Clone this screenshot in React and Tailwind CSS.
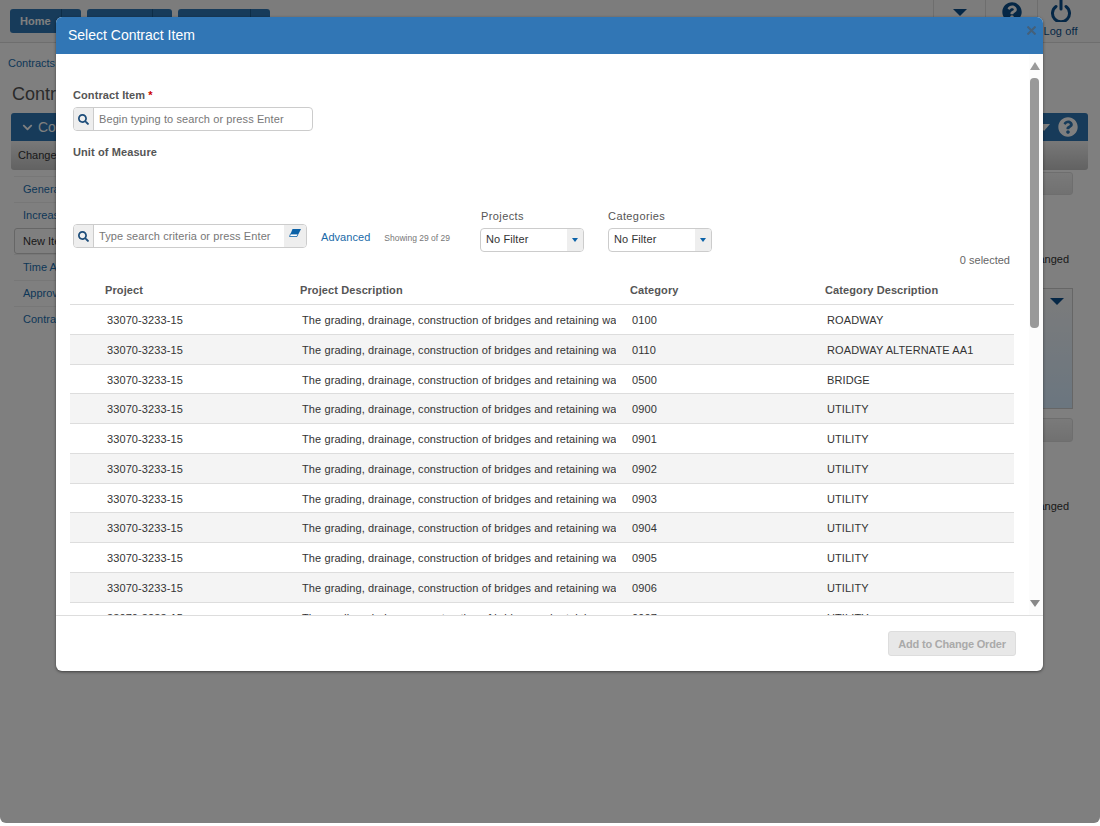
import { FaSearch, FaChevronDown, FaQuestionCircle } from 'react-icons/fa';

const rows = [
  ['0100', 'ROADWAY'],
  ['0110', 'ROADWAY ALTERNATE AA1'],
  ['0500', 'BRIDGE'],
  ['0900', 'UTILITY'],
  ['0901', 'UTILITY'],
  ['0902', 'UTILITY'],
  ['0903', 'UTILITY'],
  ['0904', 'UTILITY'],
  ['0905', 'UTILITY'],
  ['0906', 'UTILITY'],
  ['0907', 'UTILITY'],
];

const navItems = ['General', 'Increase', 'New Item', 'Time Adj', 'Approvals', 'Contract'];

function NavButton({ label, width }) {
  return (
    <div className={`flex h-[24px] rounded-[3px] bg-[#2e77b4] text-[11px] font-bold text-white ${width}`}>
      <span className="flex-1 pl-[10px] leading-[24px]">{label}</span>
      <span className="w-[20px] border-l border-[#1d5c91]" />
    </div>
  );
}

function PowerIcon() {
  return (
    <svg width="22" height="22" viewBox="0 0 22 22" fill="none" stroke="#0a4f8c" strokeWidth="3" strokeLinecap="round">
      <path d="M6 6.5a8.5 8.5 0 1 0 10 0" />
      <path d="M11 -1V9" />
    </svg>
  );
}

function Background() {
  return (
    <div className="h-[823px] overflow-hidden bg-white rounded-b-[6px]">
      <div className="flex h-[43px] justify-between border-b border-[#ddd] bg-[#f8f8f8]">
        <div className="flex gap-[6px] pl-[10px] pt-[9px]">
          <NavButton label="Home" width="w-[71px]" />
          <NavButton label="Contracts" width="w-[85px]" />
          <NavButton label="My Reports" width="w-[92px]" />
        </div>
        <div className="flex">
          <div className="flex w-[52px] justify-center border-l border-[#ddd] pt-[9px]">
            <span className="block h-0 w-0 border-x-[7px] border-t-[7px] border-x-transparent border-t-[#0a4f8c]" />
          </div>
          <div className="flex w-[52px] justify-center border-l border-[#ddd] pt-[2px]">
            <FaQuestionCircle className="text-[20px] text-[#0a4f8c]" />
          </div>
          <div className="flex w-[63px] flex-col items-center border-l border-[#ddd] pr-[17px]">
            <PowerIcon />
            <span className="mt-[2px] text-[11px] leading-[14px] tracking-[0.1px] text-[#0a4f8c]">Log off</span>
          </div>
        </div>
      </div>
      <div className="pl-[8px] pt-[13px] text-[11px] leading-[14px] text-[#1b6fb0]">Contracts</div>
      <div className="pl-[12px] pt-[12px] text-[18px] leading-[24px] text-[#555]">Contract</div>
      <div className="mx-[11px] mt-[7px] w-[1077px]">
        <div className="flex h-[28px] items-center justify-between rounded-t-[3px] bg-[#2e77b4] pl-[11px] pr-[10px] text-white">
          <span className="flex items-center gap-[5px] text-[14px]"><FaChevronDown className="text-[11px]" />Contract</span>
          <span className="flex items-center gap-[8px]">
            <span className="block h-0 w-0 border-x-[6px] border-t-[7px] border-x-transparent border-t-white" />
            <FaQuestionCircle className="text-[20px]" />
          </span>
        </div>
        <div className="flex h-[29px] items-center rounded-b-[3px] bg-gradient-to-b from-[#f2f2f2] to-[#c4c4c4] pl-[7px] text-[11px] text-[#333]">Change</div>
      </div>
      <div className="flex">
        <div className="ml-[14px] mt-[6px] w-[200px] text-[11px] text-[#1b6fb0]">
          {navItems.map((item) => (
            <div
              key={item}
              className={`flex h-[26px] items-center ${item === 'New Item' ? 'rounded-[3px] border border-[#ccc] pl-[8px] text-[#333]' : 'border-t border-[#eee] pl-[9px]'}`}
            >
              {item}
            </div>
          ))}
        </div>
        <div className="ml-auto mr-[27px] w-[60px] pt-[2px] text-[11px] text-[#333]">
          <div className="h-[23px] rounded-[3px] border border-[#ddd] bg-gradient-to-b from-[#f5f5f5] to-[#e2e2e2]" />
          <div className="mt-[56px] pr-[4px] text-right leading-[16px]">Changed</div>
          <div className="mt-[21px] flex h-[121px] justify-end border border-[#ccc] bg-gradient-to-b from-[#f8f8f8] to-[#d6ecff] pr-[8px] pt-[9px]">
            <span className="block h-0 w-0 border-x-[7px] border-t-[7px] border-x-transparent border-t-[#0a4f8c]" />
          </div>
          <div className="mt-[9px] h-[24px] rounded-[3px] border border-[#ddd] bg-gradient-to-b from-[#f5f5f5] to-[#e2e2e2]" />
          <div className="mt-[56px] pr-[4px] text-right leading-[16px]">Changed</div>
        </div>
      </div>
    </div>
  );
}

function Eraser() {
  return (
    <svg width="12" height="8" viewBox="0 0 12 8">
      <path d="M3.5 0H12L9.5 5H1.5Z" fill="#0b62a8" />
      <path d="M1.5 5H9L8 7.5H0.5Z" fill="#fff" stroke="#0b62a8" strokeWidth="0.8" />
    </svg>
  );
}

function SearchBox({ width, placeholder, eraser }) {
  return (
    <div className={`flex h-[24px] overflow-hidden rounded-[4px] border border-[#ccc] bg-white ${width}`}>
      <span className="flex w-[20px] items-center justify-center border-r border-[#ccc] bg-[#eee] text-[#1d4d7a]">
        <FaSearch className="text-[11px]" />
      </span>
      <span className="flex-1 pl-[5px] text-[11px] leading-[22px] tracking-[0.1px] text-[#777]">{placeholder}</span>
      {eraser && (
        <span className="flex w-[22px] items-start justify-center bg-[#eee] pt-[4px]"><Eraser /></span>
      )}
    </div>
  );
}

function FilterSelect({ label, labelClass }) {
  return (
    <div className="w-[104px]">
      <div className={`text-[11px] font-medium leading-[14px] tracking-[0.4px] text-[#555] ${labelClass}`}>{label}</div>
      <div className="mt-[5px] flex h-[24px] overflow-hidden rounded-[4px] border border-[#ccc]">
        <span className="flex-1 pl-[5px] text-[11px] leading-[21px] tracking-[0.1px] text-[#333]">No Filter</span>
        <span className="flex w-[16px] items-center justify-center bg-[#eee]">
          <span className="block h-0 w-0 border-x-[3.5px] border-t-[4px] border-x-transparent border-t-[#0b62a8]" />
        </span>
      </div>
    </div>
  );
}

function ContractItemModal() {
  return (
    <div className="absolute left-[56px] top-[17px] flex h-[654px] w-[987px] flex-col overflow-hidden rounded-[6px] bg-white shadow-[0_1px_3px_rgba(0,0,0,0.5)]">
      <div className="relative h-[37px] shrink-0 bg-[#3176b5] pl-[12px] text-[14px] leading-[36px] text-white">
        Select Contract Item
        <svg className="absolute right-[7px] top-[9px]" width="9" height="9" viewBox="0 0 9 9" stroke="#44607a" strokeWidth="2">
          <path d="M0.5 0.5L8.5 8.5M8.5 0.5L0.5 8.5" />
        </svg>
      </div>

      <div className="relative flex-1 overflow-hidden pl-[14px]">
        <div className="w-[944px]">
          <div className="pl-[3px] pt-[34px] text-[11px] font-bold leading-[14px] tracking-[0.1px] text-[#555]">
            Contract Item <span className="text-[#c00]">*</span>
          </div>
          <div className="ml-[3px] mt-[5px]">
            <SearchBox width="w-[240px]" placeholder="Begin typing to search or press Enter" />
          </div>
          <div className="pl-[3px] pt-[14px] text-[11px] font-bold leading-[14px] tracking-[0.1px] text-[#555]">Unit of Measure</div>

          <div className="relative mt-[50px] flex items-start pl-[3px]">
            <div className="mt-[15px]"><SearchBox width="w-[234px]" placeholder="Type search criteria or press Enter" eraser /></div>
            <span className="ml-[14px] mt-[21px] text-[11px] leading-[14px] tracking-[0.05px] text-[#1a6aa8]">Advanced</span>
            <span className="ml-[14px] mt-[22px] text-[8.5px] leading-[14px] text-[#777]">Showing 29 of 29</span>
            <div className="ml-[30px] flex gap-[24px]">
              <FilterSelect label="Projects" labelClass="pl-[1px]" />
              <FilterSelect label="Categories" />
            </div>
          </div>
          <div className="pt-[1px] pr-[4px] text-right text-[11px] leading-[14px] text-[#666]">0 selected</div>

          <div className="mt-[9px] grid h-[29px] grid-cols-[230px_330px_195px_189px] border-b border-[#ddd] text-[11px] font-bold leading-[29px] tracking-[0.1px] text-[#555]">
            <span className="pl-[35px]">Project</span>
            <span>Project Description</span>
            <span>Category</span>
            <span>Category Description</span>
          </div>
          {rows.map(([code, desc], i) => (
            <div
              key={code}
              className={`grid h-[29.75px] grid-cols-[230px_330px_195px_189px] border-b border-[#ddd] text-[11px] leading-[30px] tracking-[0.1px] text-[#333] ${i % 2 ? 'bg-[#f4f4f4]' : 'bg-white'}`}
            >
              <span className="pl-[37px]">33070-3233-15</span>
              <span className="w-[316px] overflow-hidden whitespace-nowrap pl-[2px]">
                The grading, drainage, construction of bridges and retaining walls for the project
              </span>
              <span className="pl-[2px]">{code}</span>
              <span className="pl-[2px]">{desc}</span>
            </div>
          ))}
        </div>

        {/* hand drawn scrollbar, same as the one in the shot */}
        <div className="absolute right-0 top-0 h-full w-[14px] bg-[#fcfcfc]">
          <span className="absolute left-[1px] top-[8px] block h-0 w-0 border-x-[5.5px] border-b-[8px] border-x-transparent border-b-[#999]" />
          <span className="absolute left-[1px] top-[24px] block h-[250px] w-[9px] rounded-[4px] bg-[#999]" />
          <span className="absolute bottom-[8px] left-[1px] block h-0 w-0 border-x-[5.5px] border-t-[7px] border-x-transparent border-t-[#888]" />
        </div>
      </div>

      <div className="flex h-[56px] shrink-0 items-start justify-end border-t border-[#ddd] pr-[27px] pt-[15px]">
        <button className="h-[25px] w-[128px] rounded-[3px] border border-[#ddd] bg-[#e8e8e8] pt-[1px] text-[11px] font-bold tracking-[-0.2px] text-[#aaa]">
          Add to Change Order
        </button>
      </div>
    </div>
  );
}

export default function App() {
  return (
    <div className="relative h-[826px] overflow-hidden bg-white font-['Liberation_Sans',Arial,sans-serif]">
      <Background />
      <div className="absolute inset-x-0 top-0 h-[823px] rounded-b-[6px] bg-black/50" />
      <ContractItemModal />
    </div>
  );
}
